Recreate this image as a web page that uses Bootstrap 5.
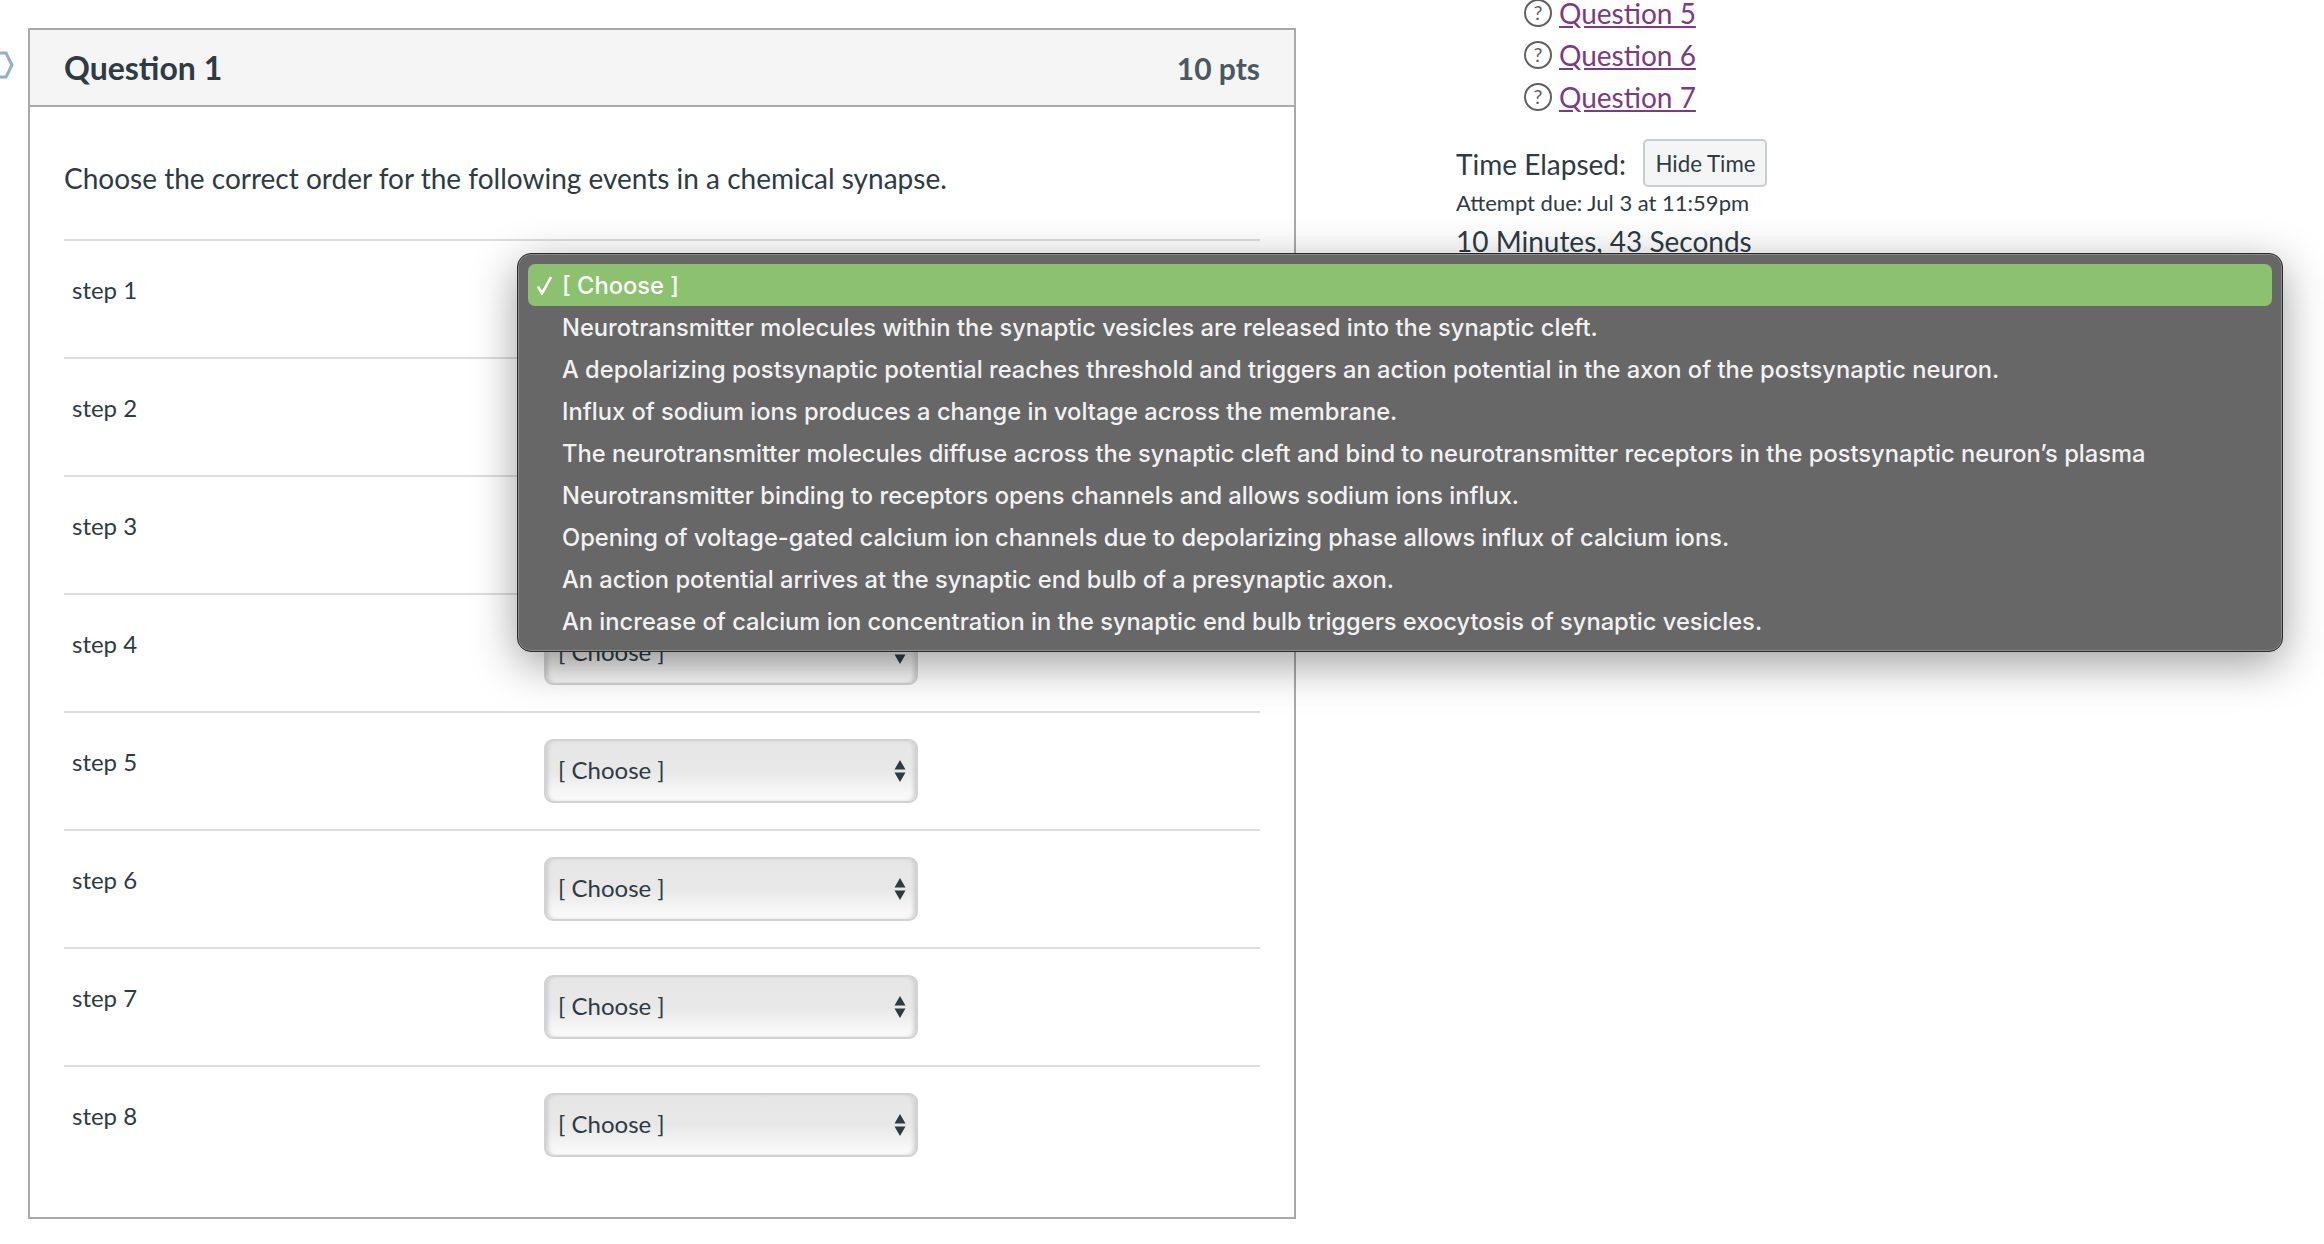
<!DOCTYPE html>
<html lang="en">
<head>
<meta charset="utf-8">
<title>Quiz</title>
<link href="https://cdn.jsdelivr.net/npm/bootstrap@5.3.0/dist/css/bootstrap.min.css" rel="stylesheet">
<style>
html,body{height:1244px;overflow:hidden;background:#fff}
body{font-family:"Lato","Liberation Sans",sans-serif;color:#2d3b45;font-size:24px}
.pg{position:relative;height:1244px;padding:28px 0 0 28px;display:flex;align-items:flex-start}
.side-mark{position:absolute;left:-8px;top:50px}
.qcard{width:1268px;height:1191px;flex:none;border:2px solid #a9a9a9;border-radius:0;--bs-card-bg:#fff}
.qhead{height:77px;background:#f5f5f5;border-bottom:2px solid #a9a9a9;border-radius:0!important;padding:0 34px;display:flex;justify-content:space-between;align-items:center}
.qhead h2{font-size:32px;font-weight:700;margin:2px 0 0;color:#2d3b45}
.qhead span{font-size:30px;font-weight:700;color:#4a5862;margin-top:2px}
.qbody{padding:0 34px}
.qtext{font-size:28px;height:132px;margin:0;padding-top:51px;line-height:40px}
.steprow{height:118px;border-top:2px solid #ddd;display:flex}
.steplabel{width:480px;padding:31px 0 0 8px;line-height:36px;font-size:24px}
.stepsel{width:374px;height:64px;margin-top:26px;font-family:"Lato",sans-serif;font-size:24px;color:#2d3b45;padding:0 0 2px 12px;border:2px solid #d2d2d2;border-radius:9px;appearance:none;
 background:url("data:image/svg+xml,%3Csvg xmlns='http://www.w3.org/2000/svg' width='12' height='22'%3E%3Cpath d='M6 0l5.500 9.500H.5zM.5 12.500h11L6 22z' fill='%232d3b45'/%3E%3C/svg%3E") no-repeat right 10px center,linear-gradient(#e6e6e6 0,#e8e8e8 50%,#f8f8f8 90%,#fafafa 100%);box-shadow:inset 4px 0 4px -2px #cdcdcd,inset -4px 0 4px -2px #cdcdcd}
.sidecol{margin-left:160px;margin-top:-36px;width:360px}
.qlinks{list-style:none;margin:0 0 0 68px;padding:0}
.qlinks li{display:flex;align-items:center;gap:7px;height:42px;font-size:28px}
.qlinks a{color:#7b3a83;line-height:28px}
.timer-line{display:flex;align-items:center;margin-top:21px;font-size:28px;height:48px}
.timer-line span{padding-top:1px}
.timer-btn{margin-left:17px;font-size:22.300px;height:48px;width:124px;padding:2px 0 0 1px;color:#2d3b45;background:#f5f5f5;border:2px solid #c7cdd1;border-radius:5px;font-family:"Lato",sans-serif}
.due{font-size:22px;margin-top:0;line-height:32px}
.elapsed{font-size:28px;line-height:40px;margin-top:2px}
.popmenu{position:absolute;left:517px;top:253px;width:1766px;height:399px;background:#676767;border:1px solid #2a2a2a;border-radius:14px;padding:10px;box-shadow:inset 0 0 0 1px #8a8a8a,0 12px 45px rgba(0,0,0,.38);font-family:"Inter","Liberation Sans",sans-serif;font-size:23.700px;font-weight:450;color:#f2f2f2}
.popitem{height:42px;line-height:44px;padding-left:34px;position:relative;white-space:nowrap}
.popitem.sel{background:#8bc16f;border-radius:7px;color:#fff}
.tick{position:absolute;left:8px;top:12px}
</style>
</head>
<body>
<div class="pg">
  <svg class="side-mark" width="24" height="30" viewBox="0 0 24 30"><path d="M2 3h12l6 12-6 12H2" fill="none" stroke="#8fb0c9" stroke-width="3"/></svg>
  <div class="card qcard">
    <div class="card-header qhead"><h2>Question 1</h2><span>10 pts</span></div>
    <div class="card-body qbody">
      <p class="qtext">Choose the correct order for the following events in a chemical synapse.</p>
      <div class="steprow"><div class="steplabel">step 1</div><select class="form-select stepsel"><option>[ Choose ]</option></select></div>
      <div class="steprow"><div class="steplabel">step 2</div><select class="form-select stepsel"><option>[ Choose ]</option></select></div>
      <div class="steprow"><div class="steplabel">step 3</div><select class="form-select stepsel"><option>[ Choose ]</option></select></div>
      <div class="steprow"><div class="steplabel">step 4</div><select class="form-select stepsel"><option>[ Choose ]</option></select></div>
      <div class="steprow"><div class="steplabel">step 5</div><select class="form-select stepsel"><option>[ Choose ]</option></select></div>
      <div class="steprow"><div class="steplabel">step 6</div><select class="form-select stepsel"><option>[ Choose ]</option></select></div>
      <div class="steprow"><div class="steplabel">step 7</div><select class="form-select stepsel"><option>[ Choose ]</option></select></div>
      <div class="steprow"><div class="steplabel">step 8</div><select class="form-select stepsel"><option>[ Choose ]</option></select></div>
    </div>
  </div>
  <div class="sidecol">
    <ul class="qlinks">
      <li><svg width="28" height="28" viewBox="0 0 28 28"><circle cx="14" cy="14" r="13" fill="none" stroke="#5f5f5f" stroke-width="2"/><text x="14" y="20.500" text-anchor="middle" font-size="20" fill="#5f5f5f" font-family="Lato">?</text></svg><a href="#">Question 5</a></li>
      <li><svg width="28" height="28" viewBox="0 0 28 28"><circle cx="14" cy="14" r="13" fill="none" stroke="#5f5f5f" stroke-width="2"/><text x="14" y="20.500" text-anchor="middle" font-size="20" fill="#5f5f5f" font-family="Lato">?</text></svg><a href="#">Question 6</a></li>
      <li><svg width="28" height="28" viewBox="0 0 28 28"><circle cx="14" cy="14" r="13" fill="none" stroke="#5f5f5f" stroke-width="2"/><text x="14" y="20.500" text-anchor="middle" font-size="20" fill="#5f5f5f" font-family="Lato">?</text></svg><a href="#">Question 7</a></li>
    </ul>
    <div class="timer-line"><span>Time Elapsed:</span><button type="button" class="btn timer-btn">Hide Time</button></div>
    <div class="due">Attempt due: Jul 3 at 11:59pm</div>
    <div class="elapsed">10 Minutes, 43 Seconds</div>
  </div>
  <div class="popmenu">
    <div class="popitem sel"><svg class="tick" width="18" height="19" viewBox="0 0 18 19"><path d="M2 10.500l4 7L15 1" fill="none" stroke="#fff" stroke-width="2.600"/></svg>[ Choose ]</div>
    <div class="popitem">Neurotransmitter molecules within the synaptic vesicles are released into the synaptic cleft.</div>
    <div class="popitem">A depolarizing postsynaptic potential reaches threshold and triggers an action potential in the axon of the postsynaptic neuron.</div>
    <div class="popitem">Influx of sodium ions produces a change in voltage across the membrane.</div>
    <div class="popitem">The neurotransmitter molecules diffuse across the synaptic cleft and bind to neurotransmitter receptors in the postsynaptic neuron’s plasma</div>
    <div class="popitem">Neurotransmitter binding to receptors opens channels and allows sodium ions influx.</div>
    <div class="popitem">Opening of voltage-gated calcium ion channels due to depolarizing phase allows influx of calcium ions.</div>
    <div class="popitem">An action potential arrives at the synaptic end bulb of a presynaptic axon.</div>
    <div class="popitem">An increase of calcium ion concentration in the synaptic end bulb triggers exocytosis of synaptic vesicles.</div>
  </div>
</div>
<script src="https://cdn.jsdelivr.net/npm/bootstrap@5.3.0/dist/js/bootstrap.bundle.min.js"></script>
</body>
</html>
